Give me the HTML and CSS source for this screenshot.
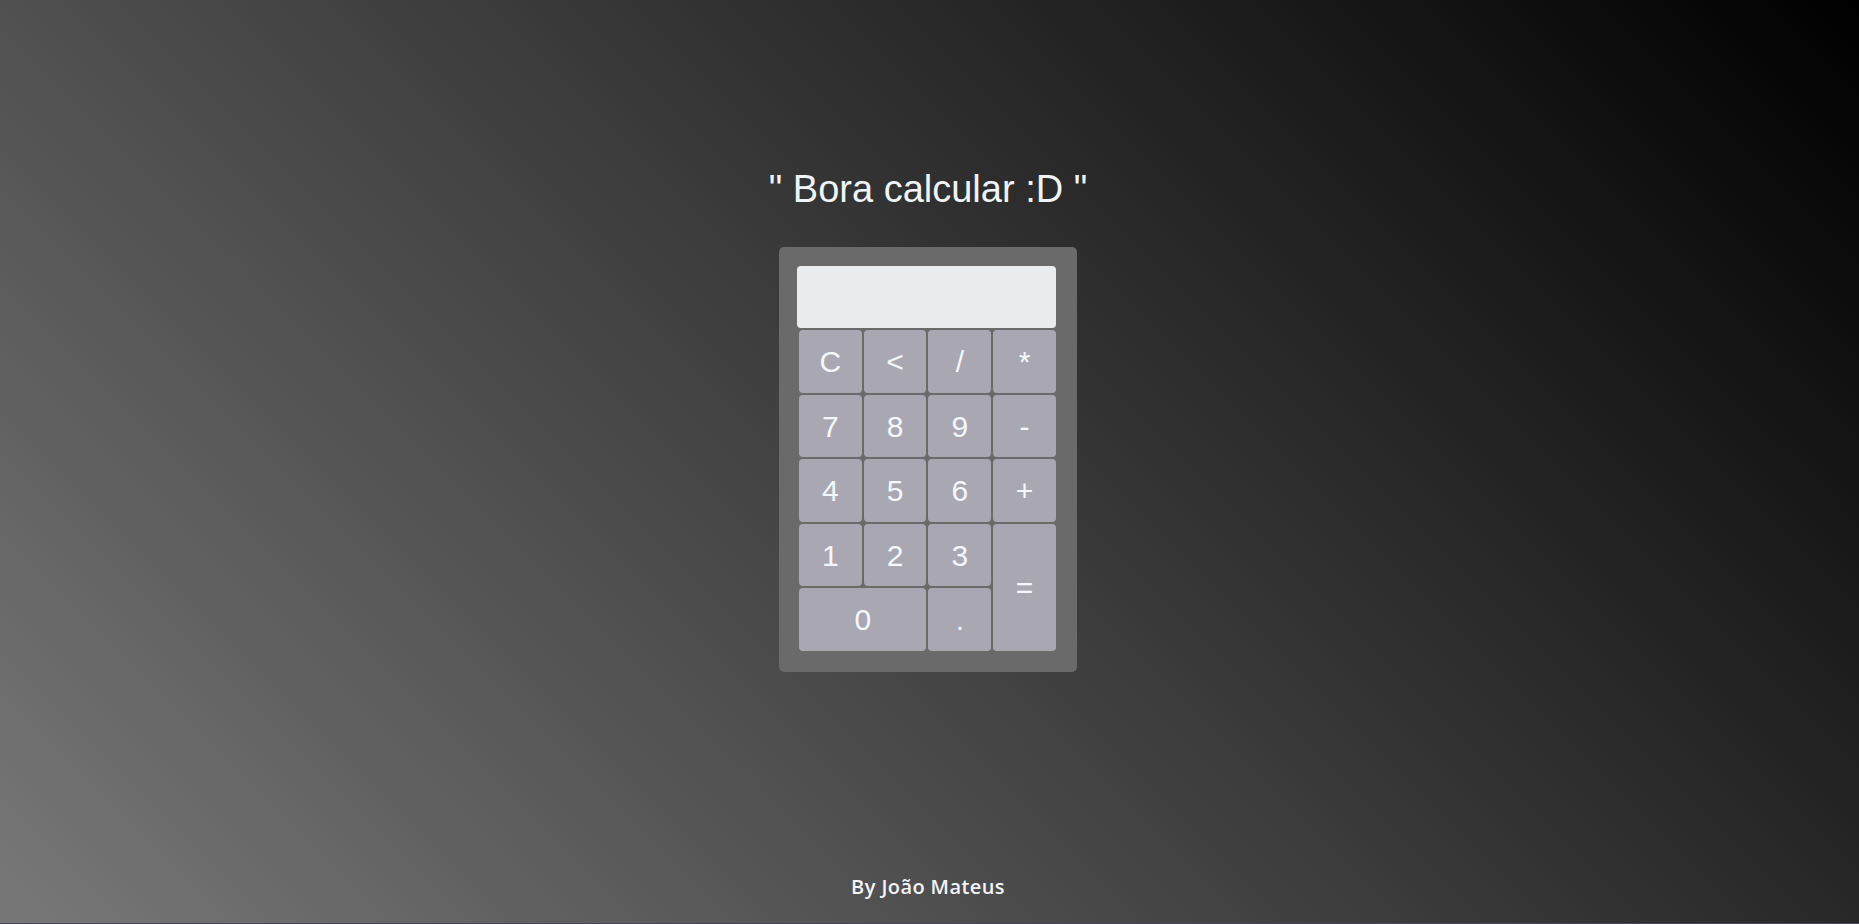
FILE: index.html
```html
<!DOCTYPE html>
<html lang="pt-BR">
<head>
<meta charset="utf-8">
<title>Calculadora</title>
<link rel="stylesheet" href="styles.css">
</head>
<body>
<div class="page">
  <main class="main">
    <h1 class="title">" Bora calcular :D "</h1>
    <div class="calc">
      <div class="display"></div>
      <div class="keys">
        <button class="key">C</button>
        <button class="key">&lt;</button>
        <button class="key">/</button>
        <button class="key">*</button>
        <button class="key">7</button>
        <button class="key">8</button>
        <button class="key">9</button>
        <button class="key">-</button>
        <button class="key">4</button>
        <button class="key">5</button>
        <button class="key">6</button>
        <button class="key">+</button>
        <button class="key">1</button>
        <button class="key">2</button>
        <button class="key">3</button>
        <button class="key key-eq">=</button>
        <button class="key key-zero">0</button>
        <button class="key">.</button>
      </div>
    </div>
  </main>
  <footer class="footer">By João Mateus</footer>
</div>
</body>
</html>
```

FILE: styles.css
```css
* { box-sizing: border-box; }

html, body {
  margin: 0;
  padding: 0;
  height: 100%;
}

body {
  background: linear-gradient(45deg, #787878 0%, #000 100%);
  font-family: "Liberation Sans", Arial, sans-serif;
  overflow: hidden;
}

.page {
  height: 100vh;
  display: flex;
  flex-direction: column;
  align-items: center;
  border-bottom: 1px solid #46465a;
}

.main {
  flex: 1;
  display: flex;
  flex-direction: column;
  align-items: center;
}

.title {
  margin: 168px 0 0 0;
  font-size: 38px;
  font-weight: 400;
  line-height: 42px;
  color: #f0f4f8;
  margin-left: -3px;
}

.calc {
  margin-top: 37px;
  width: 298px;
  height: 425px;
  background: #6a6a6a;
  border-radius: 5px;
  padding: 19px 21px 21px 18px;
  margin-left: -3px;
}

.display {
  height: 62px;
  background: #e9edf0;
  border-radius: 4px;
}

.keys {
  margin: 2px 0 0 2px;
  display: grid;
  grid-template-columns: repeat(4, 62.75px);
  grid-template-rows: repeat(5, 62.5px);
  gap: 2px;
}

.key {
  border: none;
  background: #a9a8b2;
  border-radius: 4px;
  color: #f4f7fc;
  font-family: "Liberation Sans", Arial, sans-serif;
  font-size: 30px;
  padding: 2px 0 0 0;
  margin: 0;
}

.key-eq { grid-column: 4; grid-row: 4 / span 2; }
.key-zero { grid-column: 1 / span 2; }

.footer {
  margin-bottom: 23px;
  font-family: "Open Sans", "Lato", sans-serif;
  font-weight: 600;
  font-size: 20px;
  letter-spacing: 0.4px;
  color: #f2f4f8;
  margin-left: -3px;
}
```
